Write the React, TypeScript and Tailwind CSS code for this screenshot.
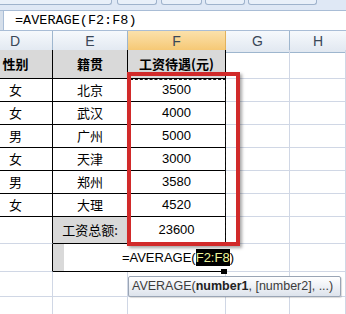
import React from "react";

const cjk = { fontFamily: '"Noto Sans CJK SC", "Liberation Sans", sans-serif' };
const arial = { fontFamily: '"Liberation Sans", Arial, sans-serif' };

type CellProps = { className?: string; children?: React.ReactNode; style?: React.CSSProperties };
function Cell({ className = "", children, style }: CellProps) {
  return (
    <div className={"flex items-center justify-center border-r border-b box-border " + className} style={style}>
      {children}
    </div>
  );
}

const data = [
  ["女", "北京", "3500"],
  ["女", "武汉", "4000"],
  ["男", "广州", "5000"],
  ["女", "天津", "3000"],
  ["男", "郑州", "3580"],
  ["女", "大理", "4520"],
];

export default function App() {
  return (
    <div className="relative w-[346px] h-[314px] overflow-hidden bg-white text-black">
      {/* ribbon remnants */}
      <div className="h-[10px] bg-[#dfe8f5] flex items-start">
        <div className="w-[112px] h-[5px] bg-[#e9f0f9] border-b border-r border-[#9fb3cc] rounded-br-[3px]" />
        <div className="ml-[5px] w-[40px] h-[5px] bg-[#e9f0f9] border-b border-x border-[#9fb3cc] rounded-b-[3px]" />
        <div className="ml-[4px] w-[41px] h-[5px] bg-[#e9f0f9] border-b border-x border-[#9fb3cc] rounded-b-[3px]" />
        <div className="ml-[3px] w-[40px] h-[5px] bg-[#e9f0f9] border-b border-x border-[#9fb3cc] rounded-b-[3px]" />
        <div className="ml-[3px] w-[69px] h-[5px] bg-[#e9f0f9] border-b border-x border-[#9fb3cc] rounded-b-[3px]" />
      </div>
      {/* formula bar */}
      <div className="h-[21px] flex border-t border-b border-[#a9bdd6] bg-white">
        <div className="w-[4px] h-full bg-[#d6dfea] border-r border-[#a9bdd6]" />
        <div className="pl-[11px] flex items-center text-[13.5px] leading-none" style={{ fontFamily: '"Liberation Mono", monospace' }}>
          =AVERAGE(F2:F8)
        </div>
      </div>
      {/* column headers */}
      <div className="grid grid-cols-[53px_75px_98px_64px_56px] h-[19px] text-[14px] text-[#3a4757]" style={arial}>
        <div className="flex items-center pl-[10px] bg-gradient-to-b from-[#f6f9fc] to-[#e1e8f1] border-r border-b border-[#9eb6ce]">D</div>
        <div className="flex items-center justify-center bg-gradient-to-b from-[#f6f9fc] to-[#e1e8f1] border-r border-b border-[#9eb6ce]">E</div>
        <div className="flex items-center justify-center bg-gradient-to-b from-[#fbe1ab] to-[#f5c66f] border-r border-b border-[#e2b25c]">F</div>
        <div className="flex items-center justify-center bg-gradient-to-b from-[#f6f9fc] to-[#e1e8f1] border-r border-b border-[#9eb6ce]">G</div>
        <div className="flex items-center justify-center bg-gradient-to-b from-[#f6f9fc] to-[#e1e8f1] border-b border-[#9eb6ce]">H</div>
      </div>
      {/* sheet */}
      <div className="grid grid-cols-[53px_75px_98px_64px_56px] text-[13px]" style={cjk}>
        {/* row 1 */}
        <Cell className="h-[29px] border-black bg-[#d9d9d9] font-bold pr-[21px]">性别</Cell>
        <Cell className="h-[29px] border-black bg-[#d9d9d9] font-bold">籍贯</Cell>
        <Cell className="h-[29px] border-black bg-[#d9d9d9] font-bold">工资待遇(元)</Cell>
        <Cell className="h-[29px] border-[#d0d7e5]" />
        <Cell className="h-[29px] border-[#d0d7e5]" />
        {data.map((r, i) => (
          <React.Fragment key={i}>
            <Cell className="h-[23px] border-black pr-[21px]">{r[0]}</Cell>
            <Cell className="h-[23px] border-black">{r[1]}</Cell>
            <Cell className="h-[23px] border-black" style={arial}>
              {r[2]}
            </Cell>
            <Cell className="h-[23px] border-[#d0d7e5]" />
            <Cell className="h-[23px] border-[#d0d7e5]" />
          </React.Fragment>
        ))}
        {/* row 8 */}
        <Cell className="h-[27px] border-r-black border-b-[#d0d7e5]" />
        <Cell className="h-[27px] border-black bg-[#d9d9d9]">工资总额:</Cell>
        <Cell className="h-[27px] border-black" style={arial}>
          23600
        </Cell>
        <Cell className="h-[27px] border-[#d0d7e5]" />
        <Cell className="h-[27px] border-[#d0d7e5]" />
        {/* row 9 */}
        <Cell className="h-[28px] border-r-black border-b-[#d0d7e5]" />
        <Cell className="h-[28px] border-r-0 border-b-black bg-[#d9d9d9]" />
        <Cell className="h-[28px] border-r-[#d0d7e5] border-b-black" />
        <Cell className="h-[28px] border-[#d0d7e5]" />
        <Cell className="h-[28px] border-[#d0d7e5]" />
        {/* row 10 */}
        <Cell className="h-[25px] border-[#d0d7e5]" />
        <Cell className="h-[25px] border-[#d0d7e5]" />
        <Cell className="h-[25px] border-[#d0d7e5]" />
        <Cell className="h-[25px] border-[#d0d7e5]" />
        <Cell className="h-[25px] border-[#d0d7e5]" />
        {/* row 11 */}
        <Cell className="h-[25px] border-[#d0d7e5]" />
        <Cell className="h-[25px] border-[#d0d7e5]" />
        <Cell className="h-[25px] border-[#d0d7e5]" />
        <Cell className="h-[25px] border-[#d0d7e5]" />
        <Cell className="h-[25px] border-[#d0d7e5]" />
      </div>

      {/* edit overlay */}
      <div className="absolute left-[64px] top-[244px] w-[170px] h-[27px] bg-white flex items-center justify-end text-[13px] leading-none" style={arial}>
        <span>=AVERAGE(</span>
        <span className="bg-black text-[#eef59a] py-[2px]">F2:F8</span>
        <span>)</span>
      </div>
      {/* fill handle */}
      <div className="absolute left-[221px] top-[269px] w-[6px] h-[5px] bg-black" />

      {/* marching ants */}
      <div className="absolute left-[130px] top-[79px] w-[96px] h-[164px] border border-dashed border-[#111]" />
      {/* red box */}
      <div className="absolute left-[127px] top-[72px] w-[113px] h-[174px] border-[4px] border-[#d12a2a] shadow-[2px_2px_3px_rgba(0,0,0,0.35)]" />

      {/* tooltip */}
      <div
        className="absolute left-[128px] top-[276px] w-[213px] h-[21px] rounded-[2px] border border-[#9aa5b5] bg-gradient-to-b from-[#ffffff] to-[#dde3ec] flex items-center pl-[3px] text-[12.5px] text-[#3c3c3c] shadow-[1px_1px_1px_rgba(0,0,0,0.15)]"
        style={arial}
      >
        AVERAGE(<b className="text-[#222]">number1</b>, [number2], ...)
      </div>
    </div>
  );
}
